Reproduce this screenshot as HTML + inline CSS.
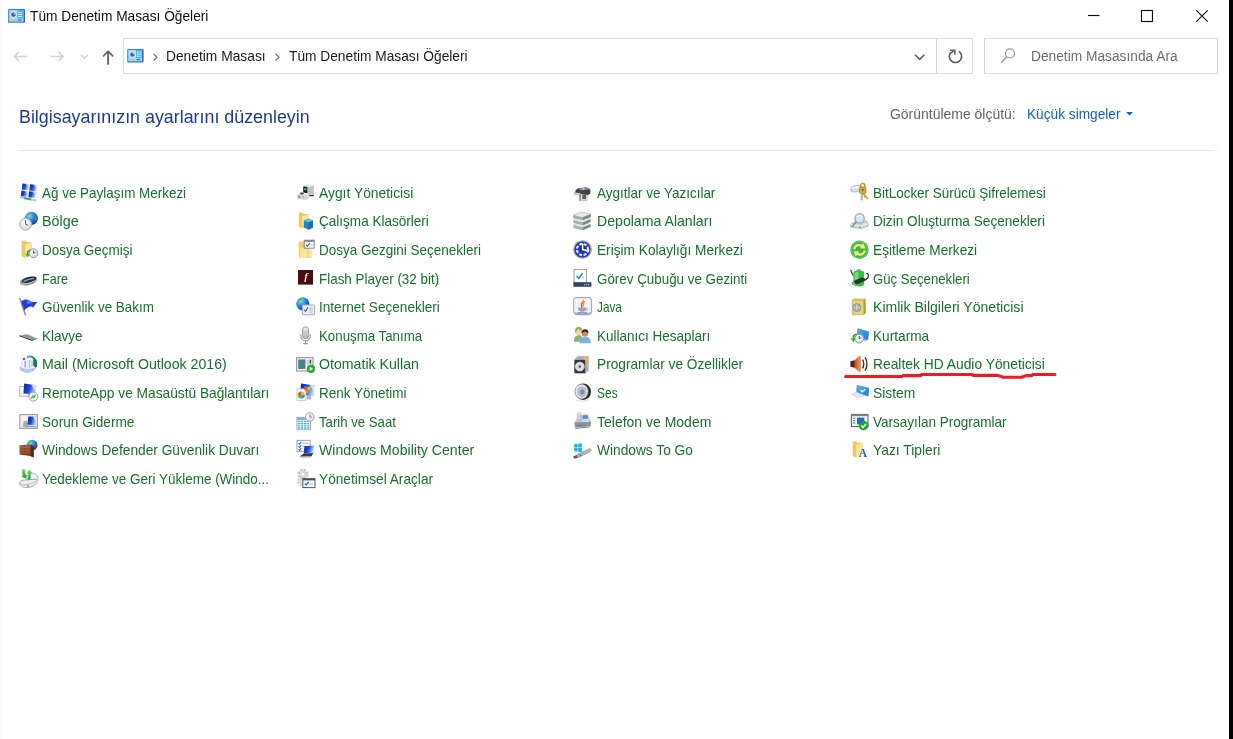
<!DOCTYPE html>
<html lang="tr"><head><meta charset="utf-8"><title>Tüm Denetim Masası Öğeleri</title>
<style>
html,body{margin:0;padding:0;background:#fff;}
body{width:1233px;height:739px;position:relative;overflow:hidden;font-family:"Liberation Sans",sans-serif;}
.t{position:absolute;white-space:nowrap;line-height:24px;height:24px;transform-origin:0 50%;}
.box{position:absolute;box-sizing:border-box;border:1px solid #d9d9d9;background:#fff;}
svg{position:absolute;overflow:visible;}
.ic{width:20px;height:20px;}
</style></head><body>

<svg width="0" height="0" style="position:absolute"><defs>
<radialGradient id="gGlobe" cx="0.35" cy="0.3" r="0.8"><stop offset="0" stop-color="#8fd4ff"/><stop offset="0.45" stop-color="#2f86e0"/><stop offset="1" stop-color="#10248c"/></radialGradient>
<linearGradient id="gMon" x1="0" y1="0" x2="1" y2="0.3"><stop offset="0" stop-color="#0a1fa8"/><stop offset="0.55" stop-color="#2148d8"/><stop offset="1" stop-color="#b8d4ff"/></linearGradient>
<linearGradient id="gFolder" x1="0" y1="0" x2="1" y2="1"><stop offset="0" stop-color="#fbe7a2"/><stop offset="1" stop-color="#f2c75c"/></linearGradient>
<linearGradient id="gGray" x1="0" y1="0" x2="0" y2="1"><stop offset="0" stop-color="#f4f5f6"/><stop offset="1" stop-color="#aeb2b8"/></linearGradient>
<linearGradient id="gGreen" x1="0" y1="0" x2="0" y2="1"><stop offset="0" stop-color="#6be070"/><stop offset="1" stop-color="#1f9a2c"/></linearGradient>
<radialGradient id="gClock" cx="0.4" cy="0.35" r="0.8"><stop offset="0" stop-color="#ffffff"/><stop offset="1" stop-color="#cfd3d8"/></radialGradient>
<linearGradient id="gBrick" x1="0" y1="0" x2="0" y2="1"><stop offset="0" stop-color="#a05a34"/><stop offset="1" stop-color="#6e3218"/></linearGradient>
<linearGradient id="gSpk" x1="0" y1="0" x2="1" y2="0"><stop offset="0" stop-color="#7a2a12"/><stop offset="0.6" stop-color="#d8683a"/><stop offset="1" stop-color="#f0a070"/></linearGradient>
<linearGradient id="gBlueMon" x1="0" y1="0" x2="1" y2="1"><stop offset="0" stop-color="#54b8f4"/><stop offset="1" stop-color="#1878d8"/></linearGradient>
<filter id="fb" x="-10%" y="-10%" width="120%" height="120%"><feGaussianBlur stdDeviation="0.35"/></filter>
</defs></svg>
<div style="position:absolute;left:1229px;top:0;width:4px;height:739px;background:#000"></div>
<div style="position:absolute;left:1px;top:0;width:1px;height:739px;background:#f8f8f8"></div>
<svg style="left:8px;top:8.9px" width="17.1" height="13.8" viewBox="0 0 17 14"><g filter="url(#fb)"><rect x="0" y="0" width="17" height="14" rx="0.9" fill="#2c78d2"/><path d="M15.8 0.6H16.6V13.4H15.8Z" fill="#0f4f9f"/>
<rect x="1" y="1" width="14.6" height="11.8" fill="#a6dbfb"/><rect x="9.2" y="1" width="5.8" height="8.6" fill="#4bb2f3"/>
<circle cx="5.4" cy="5.7" r="3.1" fill="#f4fbff"/><circle cx="5.4" cy="5.7" r="2.4" fill="#1763cf"/><path d="M5.6 5.5V2.9A2.7 2.7 0 0 1 8.2 5.5Z" fill="#f5c542"/>
<path d="M10 3.4H14.2M10 5.5H14.2M10 7.6H14.2" stroke="#f2faff" stroke-width="0.9"/><rect x="11.8" y="2.9" width="1.4" height="1" fill="#e8a020"/>
<rect x="3" y="10.4" width="5" height="1.5" fill="#f0c040"/><rect x="9.8" y="10.4" width="3.8" height="1.5" fill="#2c86e0"/></g></svg>
<span class="t " id="title" style="left:30.20px;top:4.48px;font-size:14.5px;color:#111;transform:scaleX(0.9460)">Tüm Denetim Masası Öğeleri</span>
<svg style="left:1080px;top:0" width="140" height="32" viewBox="0 0 140 32" fill="none" stroke="#111" stroke-width="1.15">
<path d="M8 15.5H19.5"/><rect x="61.5" y="10.5" width="11" height="11"/><path d="M116.3 10.3L127.7 21.7M127.7 10.3L116.3 21.7"/></svg>
<svg style="left:0;top:38px" width="124" height="36" viewBox="0 38 124 36" fill="none">
<path d="M14.4 56.5H27.4M19.1 51.9L14.4 56.5L19.1 61.1" stroke="#d4d4d4" stroke-width="1.5"/>
<path d="M50.1 56.5H63.2M58.5 51.9L63.2 56.5L58.5 61.1" stroke="#d4d4d4" stroke-width="1.5"/>
<path d="M80.9 54.5L84.5 58.3L88.1 54.5" stroke="#cdcdcd" stroke-width="1.2"/>
<path d="M108.1 64.7V51.8M103.1 56.4L108.1 51.4L113.1 56.4" stroke="#686868" stroke-width="1.9"/>
</svg>
<div class="box" style="left:123px;top:38px;width:814px;height:36px"></div>
<div class="box" style="left:936px;top:38px;width:37px;height:36px"></div>
<div class="box" style="left:984px;top:38px;width:234px;height:36px"></div>
<svg style="left:126.6px;top:49.2px" width="16.8" height="13.4" viewBox="0 0 17 14"><g filter="url(#fb)"><rect x="0" y="0" width="17" height="14" rx="0.9" fill="#2c78d2"/><path d="M15.8 0.6H16.6V13.4H15.8Z" fill="#0f4f9f"/>
<rect x="1" y="1" width="14.6" height="11.8" fill="#a6dbfb"/><rect x="9.2" y="1" width="5.8" height="8.6" fill="#4bb2f3"/>
<circle cx="5.4" cy="5.7" r="3.1" fill="#f4fbff"/><circle cx="5.4" cy="5.7" r="2.4" fill="#1763cf"/><path d="M5.6 5.5V2.9A2.7 2.7 0 0 1 8.2 5.5Z" fill="#f5c542"/>
<path d="M10 3.4H14.2M10 5.5H14.2M10 7.6H14.2" stroke="#f2faff" stroke-width="0.9"/><rect x="11.8" y="2.9" width="1.4" height="1" fill="#e8a020"/>
<rect x="3" y="10.4" width="5" height="1.5" fill="#f0c040"/><rect x="9.8" y="10.4" width="3.8" height="1.5" fill="#2c86e0"/></g></svg>
<svg style="left:150px;top:48px" width="140" height="18" viewBox="150 48 140 18" fill="none" stroke="#666" stroke-width="1.1">
<path d="M153.6 53.9L157 57.3L153.6 60.7"/><path d="M275.6 53.9L279 57.3L275.6 60.7"/></svg>
<span class="t " id="bc1" style="left:166.40px;top:44.18px;font-size:14.5px;color:#1a1a1a;transform:scaleX(0.9508)">Denetim Masası</span>
<span class="t " id="bc2" style="left:289.20px;top:44.18px;font-size:14.5px;color:#1a1a1a;transform:scaleX(0.9474)">Tüm Denetim Masası Öğeleri</span>
<svg style="left:910px;top:44px" width="110" height="26" viewBox="910 44 110 26" fill="none">
<path d="M915 54.7L919.7 59.4L924.4 54.7" stroke="#5f5f5f" stroke-width="1.6"/>
<path d="M958.9 51.3A6.15 6.15 0 1 1 950 53.6L954.5 50.3" stroke="#5f5f5f" stroke-width="1.6"/>
<path d="M950.2 50.2H954.9V54.8" stroke="#5f5f5f" stroke-width="1.5"/>
<circle cx="1010" cy="53.4" r="4.5" stroke="#8b94ac" stroke-width="1.2"/><path d="M1006.8 56.7L1001.2 62.8" stroke="#a8927e" stroke-width="1.4"/>
</svg>
<span class="t " id="search" style="left:1031.40px;top:44.15px;font-size:14.0px;color:#6d6d6d;transform:scaleX(0.9813)">Denetim Masasında Ara</span>
<span class="t " id="head" style="left:19.30px;top:104.50px;font-size:17.9px;color:#1b3a96;transform:scaleX(0.9975)">Bilgisayarınızın ayarlarını düzenleyin</span>
<span class="t " id="viewby" style="left:889.70px;top:102.48px;font-size:13.9px;color:#5f6370;transform:scaleX(1.0051)">Görüntüleme ölçütü:</span>
<span class="t " id="small" style="left:1026.90px;top:102.48px;font-size:13.9px;color:#0a64c8;transform:scaleX(0.9845)">Küçük simgeler</span>
<svg style="left:1125px;top:111px" width="9" height="6" viewBox="0 0 9 6"><path d="M1 1H8L4.5 4.6Z" fill="#0a64c8"/></svg>
<div style="position:absolute;left:14px;top:150px;width:1208px;height:1px;background:linear-gradient(90deg,rgba(220,230,244,0) 0,#dbe6f4 8px,#dbe6f4 1194px,rgba(220,230,244,0) 100%)"></div>
<svg class="ic" style="left:19px;top:182.0px" viewBox="0 0 20 20"><g filter="url(#fb)">
<path d="M0.8 15.2L17.5 18.6" stroke="#b9bec6" stroke-width="1.6"/>
<path d="M5 16L12 17.5" stroke="#2fb54a" stroke-width="2.2"/>
<path d="M3.4 1.4L9.8 2.2L9.3 8.3L2.8 7.6Z" fill="url(#gMon)"/>
<path d="M11 2.2L18 3L17.3 9.2L10.4 8.4Z" fill="url(#gMon)"/>
<path d="M2.4 8.6L8.9 9.3L8.4 15L1.8 14.3Z" fill="url(#gMon)"/>
<path d="M10 9.3L16.9 10L16.2 15.9L9.4 15.2Z" fill="url(#gMon)"/>
<path d="M6.5 2L9.6 2.4L9.4 4.5Z M14.5 2.8L17.8 3.2L17.6 5.5Z M5.5 9.2L8.7 9.5L8.5 11.5Z M13.5 9.9L16.7 10.2L16.5 12.3Z" fill="#dfeaff" opacity="0.9"/>
</g></svg>
<span class="t " id="i0_0" style="left:41.60px;top:180.88px;font-size:13.9px;color:#17702a;transform:scaleX(0.9672)">Ağ ve Paylaşım Merkezi</span>
<svg class="ic" style="left:19px;top:210.6px" viewBox="0 0 20 20"><g filter="url(#fb)">
<circle cx="12.3" cy="7.4" r="6.6" fill="url(#gGlobe)"/>
<path d="M8 3.2C9.5 1.8 11 1.6 12 2.3C11 3.5 9.5 4.4 8 5Z M16.5 5C17.6 6 17.9 8.5 17 10.5C16 9.2 15.8 6.5 16.5 5Z" fill="#3fc13c"/>
<circle cx="6.6" cy="13.2" r="5.9" fill="url(#gClock)" stroke="#a4a9b0" stroke-width="1"/>
<path d="M6.6 9V13.4L9 14.2" stroke="#555b63" stroke-width="1" fill="none"/>
</g></svg>
<span class="t " id="i0_1" style="left:41.60px;top:209.46px;font-size:13.9px;color:#17702a;transform:scaleX(1.0308)">Bölge</span>
<svg class="ic" style="left:19px;top:239.2px" viewBox="0 0 20 20"><g filter="url(#fb)">
<path d="M2.6 1.8L6.6 1.8L7.6 3L12.6 3L12.6 15.6L6.4 19.2L2.6 17.2Z" fill="#f0c860"/>
<path d="M6.2 5.6L12.6 3L12.6 15.6L6.2 19.2Z" fill="#fbe5a0"/>
<circle cx="14.5" cy="14.2" r="4.4" fill="url(#gClock)" stroke="#8e949b" stroke-width="1"/>
<path d="M14.5 11.6V14.3L16.5 13.2" stroke="#444" stroke-width="0.9" fill="none"/>
<path d="M11.2 10.6C8.6 11 7.2 13 7.8 15.4L5.8 14.8L8.8 18.2L10.6 14.2L9.3 15C9.2 13.4 10 12.4 11.4 12.2Z" fill="#2ea83a"/>
</g></svg>
<span class="t " id="i0_2" style="left:41.60px;top:238.04px;font-size:13.9px;color:#17702a;transform:scaleX(0.9679)">Dosya Geçmişi</span>
<svg class="ic" style="left:19px;top:267.7px" viewBox="0 0 20 20"><g filter="url(#fb)">
<ellipse cx="9.4" cy="13" rx="8.7" ry="4.2" transform="rotate(-14 9.4 13)" fill="#8f939a"/>
<ellipse cx="10.2" cy="11.7" rx="7.6" ry="2.7" transform="rotate(-14 10.2 11.7)" fill="#2b2e35"/>
<path d="M4.6 13.4C8 11.6 11.5 10.6 15 10.4" stroke="#8fa6c8" stroke-width="1.3" fill="none"/>
<path d="M2.2 15.6C6 16.8 12 15.4 16.6 12.4" stroke="#c3c6cb" stroke-width="1" fill="none"/>
</g></svg>
<span class="t " id="i0_3" style="left:41.60px;top:266.62px;font-size:13.9px;color:#17702a;transform:scaleX(0.9100)">Fare</span>
<svg class="ic" style="left:19px;top:296.3px" viewBox="0 0 20 20"><g filter="url(#fb)" transform="translate(0 1.2)">
<path d="M0.9 1.4L6.3 17.4" stroke="#8c919a" stroke-width="1.6" stroke-linecap="round"/>
<path d="M2.2 4.2C5 2 8 1.6 10.5 3.4C13 5.2 15.8 5.2 18.8 4.4C16.6 6.6 15.6 9 14.2 10.2C12 8.6 9.4 9.4 5.4 13.2Z" fill="#2b41cc"/>
<path d="M8 3C10 3 11.5 4.6 13.5 5.2C12 6.2 10 6 8.4 7Z" fill="#6f86ea" opacity="0.8"/>
</g></svg>
<span class="t " id="i0_4" style="left:41.60px;top:295.20px;font-size:13.9px;color:#17702a;transform:scaleX(0.9660)">Güvenlik ve Bakım</span>
<svg class="ic" style="left:19px;top:324.9px" viewBox="0 0 20 20"><g filter="url(#fb)">
<path d="M0.4 10.2L8.5 9.2L19 13.6L12.6 15.8Z" fill="#c3c7ce"/>
<path d="M0.4 10.2L12.6 14.8L19 13.6L12.6 15.8L0.4 11.2Z" fill="#2a2c31"/>
<path d="M2.4 10.2L8.3 9.6L16.6 13.3L12.7 14.3Z" fill="#8d929b"/>
</g></svg>
<span class="t " id="i0_5" style="left:41.60px;top:323.78px;font-size:13.9px;color:#17702a;transform:scaleX(0.9752)">Klavye</span>
<svg class="ic" style="left:19px;top:353.5px" viewBox="0 0 20 20"><g filter="url(#fb)">
<circle cx="10.4" cy="9.4" r="7.8" fill="url(#gGlobe)"/>
<path d="M12.6 2.2C16.6 3.6 19 8.6 17.6 13.6C15.4 11.4 13.8 6.4 12.6 2.2Z" fill="#0f8a2a"/>
<path d="M0.5 12.8L2.6 11.6L2.6 6L4.2 5L4.2 3.2L8 1.8L8 4.2L11.6 3.2L14.2 4.8L14.2 11.6L16.6 13.2L15.4 16.6L8.4 19.2L1 16.6Z" fill="#ecf3fc"/>
<path d="M0.5 12.8L8.4 15.6L16.6 13.2L15.4 16.6L8.4 19.2L1 16.6Z" fill="#b2c8ec"/>
<path d="M5.6 7H6.8V13.6H5.6Z" fill="#7f9ad0"/><path d="M9.8 6H10.8V14H9.8Z" fill="#9db4e0"/><path d="M12.6 6.4H13.4V13H12.6Z" fill="#8e9fd6"/>
<circle cx="5" cy="4.9" r="1.25" fill="#e23a22"/>
</g></svg>
<span class="t " id="i0_6" style="left:41.60px;top:352.36px;font-size:13.9px;color:#17702a;transform:scaleX(1.0187)">Mail (Microsoft Outlook 2016)</span>
<svg class="ic" style="left:19px;top:382.1px" viewBox="0 0 20 20"><g filter="url(#fb)">
<rect x="0.7" y="4.6" width="8.6" height="9.6" fill="#f7f8fa" stroke="#a7abb2" stroke-width="0.9"/>
<path d="M5.2 1.6L17.4 3.2L16.4 12.2L4.4 11.4Z" fill="url(#gMon)"/>
<path d="M12 2.6L17.2 3.3L16.6 9Z" fill="#dfeaff" opacity="0.85"/>
<circle cx="14.4" cy="14.6" r="4.5" fill="#f4f5f6" stroke="#9aa0a8" stroke-width="1"/>
<path d="M12 16.6L14 13.4L14.6 15L16.8 12.6L15 16.2L14.4 14.8Z" fill="#2ea83a" stroke="#2ea83a" stroke-width="0.6"/>
</g></svg>
<span class="t " id="i0_7" style="left:41.60px;top:380.94px;font-size:13.9px;color:#17702a;transform:scaleX(0.9879)">RemoteApp ve Masaüstü Bağlantıları</span>
<svg class="ic" style="left:19px;top:410.6px" viewBox="0 0 20 20"><g filter="url(#fb)">
<rect x="0.8" y="3.6" width="17.6" height="13.8" fill="#f3f4f5" stroke="#9b9fa5" stroke-width="1.1"/>
<path d="M3.6 16.6L4.6 10.2L7.6 9.4L9.6 16.6Z" fill="#a9adb3"/>
<path d="M9.4 5.6L17.4 5.6L17.4 14.8L8.4 13.6Z" fill="url(#gMon)"/>
<path d="M13.6 5.6H17.4V11.5Z" fill="#dfeaff" opacity="0.85"/>
<path d="M8 15.2L17.6 16" stroke="#8d9198" stroke-width="1.2"/>
</g></svg>
<span class="t " id="i0_8" style="left:41.60px;top:409.52px;font-size:13.9px;color:#17702a;transform:scaleX(0.9810)">Sorun Giderme</span>
<svg class="ic" style="left:19px;top:439.2px" viewBox="0 0 20 20"><g filter="url(#fb)">
<circle cx="13.1" cy="6.2" r="5.4" fill="url(#gGlobe)"/>
<path d="M9 3.2C10.4 1.4 12.4 0.8 14 1.2C12.6 2.8 10.8 3.8 9 4.6Z" fill="#3fc13c"/>
<path d="M0.5 6.2L11.6 5.6L14.8 7.2L14.6 18.4L11.4 17L0.7 15.6Z" fill="url(#gBrick)"/>
<path d="M11.6 5.6L14.8 7.2L14.6 18.4L11.4 17Z" fill="#5a2712"/>
<path d="M0.6 8.6L11.5 8.4M0.6 11L11.5 11.2M0.6 13.4L11.5 14" stroke="#c08a62" stroke-width="0.5" opacity="0.8"/>
</g></svg>
<span class="t " id="i0_9" style="left:41.60px;top:438.10px;font-size:13.9px;color:#17702a;transform:scaleX(0.9872)">Windows Defender Güvenlik Duvarı</span>
<svg class="ic" style="left:19px;top:467.8px" viewBox="0 0 20 20"><g filter="url(#fb)">
<ellipse cx="13.4" cy="10" rx="5.6" ry="4.8" fill="url(#gClock)" stroke="#a9adb3" stroke-width="0.9"/>
<path d="M0.4 14.6C1 13 3 12 6 12L15 11.4C17.4 11.2 19 12 18.6 13.4C18 16 13 19.4 8.4 19.6C4 19.8 0 17.6 0.4 14.6Z" fill="#eceef0" stroke="#9ea2a8" stroke-width="0.9"/>
<path d="M1 15.4C4 17.6 10 17.4 17.6 13" stroke="#b5b9bf" stroke-width="0.9" fill="none"/>
<rect x="8" y="17.2" width="1.6" height="1.6" fill="#3cc13c"/>
<path d="M3.6 0.8L6.2 1.4C6 4 6.4 5.6 7 7L8.4 6.4L6.4 10.4L2.2 8.4L3.8 8C3 5.6 3 3 3.6 0.8Z" fill="url(#gGreen)"/>
<path d="M10.4 1.4L13 5L11.6 5.2C12 7.6 11.8 9.8 11 12L8.6 11.2C9.4 9 9.6 7.4 9.2 5.6L7.8 5.8Z" fill="url(#gGreen)"/>
</g></svg>
<span class="t " id="i0_10" style="left:41.60px;top:466.68px;font-size:13.9px;color:#17702a;transform:scaleX(0.9707)">Yedekleme ve Geri Yükleme (Windo...</span>
<svg class="ic" style="left:296px;top:182.0px" viewBox="0 0 20 20"><g filter="url(#fb)">
<path d="M7.3 4.2L10.8 2.7L17.8 3.4L17.8 13.2L11 13.6L7.3 12.6Z" fill="#c2c3c5"/>
<path d="M7.3 4.2L10.8 2.7L17.8 3.4L13.6 4.9Z" fill="#e6e7e8"/>
<path d="M7.3 4.6L11.3 5L11.3 11.4L7.3 10.8Z" fill="#17191c"/>
<circle cx="9.3" cy="7.2" r="1.2" fill="#35c83a"/>
<path d="M1 12.4L5 10.4L13 11.2L13 16.6L9.6 18L1 16.6Z" fill="#d6d7d9"/>
<path d="M1 12.4L5 10.4L13 11.2L9.4 13.4Z" fill="#ececed"/>
<ellipse cx="5.9" cy="11.5" rx="1.9" ry="0.9" fill="#3a3c40"/>
<rect x="2.2" y="13.8" width="2" height="2.2" fill="#8f9296"/><rect x="6.4" y="14.2" width="1.4" height="2" fill="#a9abae"/>
<path d="M13.3 13.1H17.9V14.2H13.3Z" fill="#1c1d20"/>
</g></svg>
<span class="t " id="i1_0" style="left:319.30px;top:180.88px;font-size:13.9px;color:#17702a;transform:scaleX(0.9973)">Aygıt Yöneticisi</span>
<svg class="ic" style="left:296px;top:210.6px" viewBox="0 0 20 20"><g filter="url(#fb)">
<path d="M2.8 1.8L6.6 1.8L7.6 3L12.8 3L12.8 14.6L6.4 17.6L2.8 15.8Z" fill="#f0c860"/>
<path d="M6.2 5.4L12.8 3L12.8 14.6L6.2 17.6Z" fill="#fbe5a0"/>
<path d="M7.8 9.6L12.4 7.6L17 9.6L17 16.6L12.4 18.8L7.8 16.6Z" fill="#1f8ad0"/>
<path d="M7.8 9.6L12.4 7.6L17 9.6L12.4 11.6Z" fill="#5cc0f0"/>
<path d="M12.4 11.6L17 9.6V16.6L12.4 18.8Z" fill="#1670b8"/>
</g></svg>
<span class="t " id="i1_1" style="left:319.30px;top:209.46px;font-size:13.9px;color:#17702a;transform:scaleX(0.9749)">Çalışma Klasörleri</span>
<svg class="ic" style="left:296px;top:239.2px" viewBox="0 0 20 20"><g filter="url(#fb)">
<path d="M2.8 2.4L7.4 2.4L8.2 3.6L13 3.6L13 19L2.8 19Z" fill="#f3cd66"/>
<path d="M4.2 8.4L12 8.4L16 11.6L16 19L4.2 19Z" fill="#fbe5a0"/>
<path d="M12 8.4L12 19" stroke="#e6b94e" stroke-width="0.7"/>
<rect x="8.2" y="1.2" width="10" height="8" fill="#fbfcfd" stroke="#7f848b" stroke-width="1"/>
<rect x="8.2" y="1.2" width="10" height="1.6" fill="#7f848b"/>
<path d="M10 5.8L11.4 7.2L13.8 4.4" stroke="#1e74d8" stroke-width="1.2" fill="none"/>
<path d="M14.6 6H16.6" stroke="#9aa0a8" stroke-width="0.8"/>
</g></svg>
<span class="t " id="i1_2" style="left:319.30px;top:238.04px;font-size:13.9px;color:#17702a;transform:scaleX(0.9713)">Dosya Gezgini Seçenekleri</span>
<svg class="ic" style="left:296px;top:267.7px" viewBox="0 0 20 20"><g filter="url(#fb)">
<rect x="2" y="2" width="15" height="14.6" fill="#4a0b0d"/>
<text x="9.9" y="12.4" font-family="Liberation Serif,serif" font-style="italic" font-weight="bold" font-size="10.5" fill="#f4ecec" text-anchor="middle">f</text>
</g></svg>
<span class="t " id="i1_3" style="left:319.30px;top:266.62px;font-size:13.9px;color:#17702a;transform:scaleX(0.9669)">Flash Player (32 bit)</span>
<svg class="ic" style="left:296px;top:296.3px" viewBox="0 0 20 20"><g filter="url(#fb)">
<circle cx="6.8" cy="7.8" r="6.6" fill="url(#gGlobe)"/>
<path d="M2.4 4C3.6 2.4 5.6 1.6 7.4 1.6C6.6 3.4 4.6 4.8 2.6 5.8Z M1 9.4C2 10.6 3.4 12.6 3.2 13.6C1.8 12.6 1 11 1 9.4Z" fill="#3fc13c"/>
<rect x="6.4" y="9" width="12.2" height="9.8" rx="0.8" fill="#eceef1" stroke="#a3a8af" stroke-width="1"/>
<path d="M8 13.6L9.6 15.4L12 11.2" stroke="#1e74d8" stroke-width="1.3" fill="none"/>
<path d="M13.2 12H16.8M13.2 14H16.8M13.2 16H16.8" stroke="#a9aeb5" stroke-width="0.8"/>
</g></svg>
<span class="t " id="i1_4" style="left:319.30px;top:295.20px;font-size:13.9px;color:#17702a;transform:scaleX(0.9784)">Internet Seçenekleri</span>
<svg class="ic" style="left:296px;top:324.9px" viewBox="0 0 20 20"><g filter="url(#fb)">
<rect x="6.6" y="1.8" width="6" height="12" rx="3" fill="url(#gGray)" stroke="#8e9298" stroke-width="0.9"/>
<path d="M4.8 9.4C4.8 14 7.4 15.8 9.6 15.8C11.8 15.8 14.4 14 14.4 9.4" stroke="#8e9298" stroke-width="1.1" fill="none"/>
<path d="M9.6 15.8V18.4M7.4 18.6H11.8" stroke="#8e9298" stroke-width="1.1"/>
<path d="M7.4 6H11.8M7.4 8H11.8" stroke="#a9adb3" stroke-width="0.6"/>
</g></svg>
<span class="t " id="i1_5" style="left:319.30px;top:323.78px;font-size:13.9px;color:#17702a;transform:scaleX(0.9560)">Konuşma Tanıma</span>
<svg class="ic" style="left:296px;top:353.5px" viewBox="0 0 20 20"><g filter="url(#fb)">
<rect x="0.6" y="3.6" width="16.4" height="13.4" fill="#f4f5f6" stroke="#94989e" stroke-width="1.1"/>
<rect x="2.2" y="5.4" width="7.2" height="9.6" fill="#4e7f86"/>
<path d="M3 7H8.6M3 9.4H8.6M3 11.8H8.6" stroke="#3aa060" stroke-width="0.9" opacity="0.7"/>
<rect x="10.6" y="5.6" width="2" height="5" fill="#c8ccd2"/><rect x="13.6" y="5.6" width="1.6" height="4" fill="#30507a"/>
<circle cx="15" cy="14.8" r="3.9" fill="#2fae36" stroke="#1c8a26" stroke-width="0.6"/>
<path d="M13.8 12.8L17 14.8L13.8 16.8Z" fill="#fff"/>
</g></svg>
<span class="t " id="i1_6" style="left:319.30px;top:352.36px;font-size:13.9px;color:#17702a;transform:scaleX(1.0187)">Otomatik Kullan</span>
<svg class="ic" style="left:296px;top:382.1px" viewBox="0 0 20 20"><g filter="url(#fb)">
<path d="M11.2 13L15 13.6L15.4 17.6L10.6 17.4Z" fill="#b4b8be"/>
<path d="M5 1.6L18.6 3.6L17.6 14.2L4.2 12.4Z" fill="url(#gMon)"/>
<path d="M13.6 3L18.4 3.7L17.9 9.4Z" fill="#dfeaff" opacity="0.8"/>
<path d="M8.6 4.4C10.6 5 12.6 5 14.6 4.6C14.8 8 13.6 10.4 11.4 11.6C9.4 10.2 8.4 7.6 8.6 4.4Z" fill="#f2c23a"/>
<path d="M8.6 4.4C9.6 4.8 10.6 4.9 11.6 4.9L11.4 11.6C9.4 10.2 8.4 7.6 8.6 4.4Z" fill="#e8542e"/>
<path d="M12 8L14.4 7.6C14 9.4 13 10.8 11.4 11.6Z" fill="#54b848"/>
<path d="M0.9 7L7.6 6.8L10 9.2L10 18.4L0.9 18.4Z" fill="#fafbfc" stroke="#b0b4ba" stroke-width="0.7"/>
<circle cx="5.4" cy="13" r="3.5" fill="#f2c23a"/>
<path d="M5.4 13V9.5A3.5 3.5 0 0 0 1.9 13Z" fill="#e8542e"/>
<path d="M5.4 13H1.9A3.5 3.5 0 0 0 5.4 16.5Z" fill="#54b848"/>
<path d="M5.4 13V16.5A3.5 3.5 0 0 0 8.9 13Z" fill="#3c8ee0"/>
</g></svg>
<span class="t " id="i1_7" style="left:319.30px;top:380.94px;font-size:13.9px;color:#17702a;transform:scaleX(0.9719)">Renk Yönetimi</span>
<svg class="ic" style="left:296px;top:410.6px" viewBox="0 0 20 20"><g filter="url(#fb)">
<rect x="0.9" y="6.4" width="13.4" height="12.4" fill="#f2f8fa" stroke="#9aa3aa" stroke-width="0.9"/>
<rect x="0.9" y="6.4" width="13.4" height="2.6" fill="#8fb4c4"/>
<path d="M2 10.4H13.2M2 12.6H13.2M2 14.8H13.2M2 17H13.2" stroke="#39b4c8" stroke-width="1.3"/>
<path d="M4.4 9.2V18.4M7.6 9.2V18.4M10.8 9.2V18.4" stroke="#f2f8fa" stroke-width="0.9"/>
<circle cx="13.8" cy="6" r="4.4" fill="url(#gClock)" stroke="#9ea3aa" stroke-width="0.9"/>
<path d="M13.8 3.2V6.2H16" stroke="#666b72" stroke-width="0.8" fill="none"/>
</g></svg>
<span class="t " id="i1_8" style="left:319.30px;top:409.52px;font-size:13.9px;color:#17702a;transform:scaleX(0.9489)">Tarih ve Saat</span>
<svg class="ic" style="left:296px;top:439.2px" viewBox="0 0 20 20"><g filter="url(#fb)">
<rect x="1" y="1.4" width="13.2" height="11.2" fill="#fafbfc" stroke="#a0a4aa" stroke-width="1"/>
<path d="M2.6 4.2L3.6 5.2L5.2 3M2.6 7.4L3.6 8.4L5.2 6.2M2.6 10.4L3.6 11.4L5.2 9.2" stroke="#1e66d8" stroke-width="1.1" fill="none"/>
<path d="M6.6 4.2H12.6M6.6 7.4H12.6" stroke="#a7abb2" stroke-width="0.9"/>
<path d="M8.4 7.2L18 6.6L17.4 14L7.8 14.4Z" fill="url(#gMon)"/>
<path d="M7.8 14.4L17.4 14L15.4 17.4L3.4 17.6Z" fill="#3a3d44"/>
<path d="M5 17.8L15.2 17.6L14.8 18.6L5.6 18.8Z" fill="#aeb2b9"/>
</g></svg>
<span class="t " id="i1_9" style="left:319.30px;top:438.10px;font-size:13.9px;color:#17702a;transform:scaleX(1.0152)">Windows Mobility Center</span>
<svg class="ic" style="left:296px;top:467.8px" viewBox="0 0 20 20"><g filter="url(#fb)">
<circle cx="7" cy="6.4" r="4.2" fill="none" stroke="#c3c8cf" stroke-width="3" stroke-dasharray="2.2 1.1"/>
<circle cx="7" cy="6.4" r="3.4" fill="#d4d8de"/><circle cx="7" cy="6.4" r="1.4" fill="#fff"/>
<circle cx="5.6" cy="13.4" r="3.4" fill="none" stroke="#c9cdd4" stroke-width="2.4" stroke-dasharray="1.8 1"/>
<circle cx="5.6" cy="13.4" r="2.6" fill="#dadde2"/>
<rect x="6.8" y="10.6" width="12.2" height="9" fill="#fbfcfd" stroke="#4f545b" stroke-width="1"/>
<rect x="6.8" y="10.6" width="12.2" height="1.8" fill="#4f545b"/>
<path d="M8.8 15.6L10.2 17L12.6 14" stroke="#1e74d8" stroke-width="1.3" fill="none"/>
<path d="M13.6 16H17" stroke="#a9aeb5" stroke-width="0.8"/>
</g></svg>
<span class="t " id="i1_10" style="left:319.30px;top:466.68px;font-size:13.9px;color:#17702a;transform:scaleX(0.9849)">Yönetimsel Araçlar</span>
<svg class="ic" style="left:573px;top:182.0px" viewBox="0 0 20 20"><g filter="url(#fb)">
<path d="M6.4 10.6L14.2 10.6L14.2 18.6L6.4 18.6Z" fill="#d9dbde" stroke="#9da1a7" stroke-width="0.6"/>
<path d="M6.4 10.6H8V18.6H6.4Z" fill="#8d9197"/>
<path d="M9.4 12.6H13V17H9.4Z" fill="#55595f"/>
<path d="M4.4 6.4L13.4 5.2L17.4 7.2L17.4 11.6L15 13L2.4 11.6L2.4 8.6Z" fill="#3f4248"/>
<path d="M4.4 6.4L13.4 5.2L17.4 7.2L8.4 8.6Z" fill="#83878e"/>
<circle cx="10.6" cy="6.8" r="1.1" fill="#a9d6ff"/>
<path d="M1.4 10.6L7.4 11.2L7.4 13L1.4 12.2Z" fill="#f2f3f4" stroke="#6d7177" stroke-width="0.5"/>
</g></svg>
<span class="t " id="i2_0" style="left:596.80px;top:180.88px;font-size:13.9px;color:#17702a;transform:scaleX(0.9703)">Aygıtlar ve Yazıcılar</span>
<svg class="ic" style="left:573px;top:210.6px" viewBox="0 0 20 20"><g filter="url(#fb)">
<g id="drv"><path d="M0.4 4.2L8.4 1.2L17.6 3.2L9.6 6.4Z" fill="#e9ebee" stroke="#a4a8ae" stroke-width="0.4"/><path d="M0.4 4.2L9.6 6.4L9.6 9.2L0.4 7Z" fill="#a9adb3"/><path d="M9.6 6.4L17.6 3.2V6L9.6 9.2Z" fill="#7f848b"/><rect x="9.9" y="6.9" width="1.6" height="1.6" fill="#38c23c"/></g>
</g><g filter="url(#fb)"><use href="#drv" y="10"/><use href="#drv" y="5"/><use href="#drv" y="0"/>
</g></svg>
<span class="t " id="i2_1" style="left:596.80px;top:209.46px;font-size:13.9px;color:#17702a;transform:scaleX(1.0160)">Depolama Alanları</span>
<svg class="ic" style="left:573px;top:239.2px" viewBox="0 0 20 20"><g filter="url(#fb)">
<circle cx="9.5" cy="10.5" r="8.7" fill="#1b36b8" stroke="#a3a7b0" stroke-width="1.3"/>
<circle cx="9.5" cy="10.5" r="5.6" fill="none" stroke="#e4eaf8" stroke-width="2.2" stroke-dasharray="3 1.5"/>
<circle cx="9.5" cy="10.5" r="2.6" fill="#1a2ea0"/>
<path d="M9.6 4.6V10.6L13.6 11.4" stroke="#fff" stroke-width="1.5" fill="none"/>
<circle cx="14.8" cy="11.6" r="1.6" fill="#eef2fc"/>
</g></svg>
<span class="t " id="i2_2" style="left:596.80px;top:238.04px;font-size:13.9px;color:#17702a;transform:scaleX(0.9844)">Erişim Kolaylığı Merkezi</span>
<svg class="ic" style="left:573px;top:267.7px" viewBox="0 0 20 20"><g filter="url(#fb)">
<rect x="1" y="1.6" width="12.4" height="13.4" fill="#fcfcfd" stroke="#8f949b" stroke-width="0.9"/>
<path d="M3.6 8L5.8 10.4L9.6 5.2" stroke="#1a86d4" stroke-width="1.5" fill="none"/>
<path d="M9.8 9.6H11.2" stroke="#8a8a8a" stroke-width="0.7"/>
<rect x="0.4" y="14.2" width="18" height="4.6" fill="#36426a"/>
<path d="M11 16.6H17" stroke="#aab4d0" stroke-width="1.2" stroke-dasharray="1.2 0.8"/>
</g></svg>
<span class="t " id="i2_3" style="left:596.80px;top:266.62px;font-size:13.9px;color:#17702a;transform:scaleX(0.9632)">Görev Çubuğu ve Gezinti</span>
<svg class="ic" style="left:573px;top:296.3px" viewBox="0 0 20 20"><g filter="url(#fb)">
<rect x="0.7" y="1.6" width="17.8" height="17" rx="3" fill="#f3f4f7" stroke="#a3abbd" stroke-width="1.1"/>
<path d="M1.6 16.6C4 18.4 15 18.4 17.6 16.6" stroke="#7f8aa6" stroke-width="0.8" fill="none"/>
<path d="M10.6 3.4C6.6 6.6 12 8 8.4 12C13.4 9.6 9.6 7 13 5C11 5.4 10.4 4.6 10.6 3.4Z" fill="#f08a2c"/>
<path d="M8.8 6.6C7.4 8.4 9.6 10 8.4 12" stroke="#e84e2a" stroke-width="1.1" fill="none"/>
<path d="M5 11.6H13.4C13.4 14.6 11.8 15.8 9.2 15.8C6.6 15.8 5 14.6 5 11.6Z" fill="#90a4cc"/>
<path d="M13.4 12.2C15.6 12 15.4 14.6 12.8 14.6" stroke="#90a4cc" stroke-width="0.9" fill="none"/>
<path d="M4.4 16.8H14.2" stroke="#6f86b8" stroke-width="1.1"/>
</g></svg>
<span class="t " id="i2_4" style="left:596.80px;top:295.20px;font-size:13.9px;color:#17702a;transform:scaleX(0.8491)">Java</span>
<svg class="ic" style="left:573px;top:324.9px" viewBox="0 0 20 20"><g filter="url(#fb)">
<path d="M0.8 16.8C0.8 12.4 2.6 10.2 5.6 10.2C8.6 10.2 10.4 12.4 10.4 16.8Z" fill="#86b86a"/>
<circle cx="5.6" cy="6.6" r="3.3" fill="#ecd2b4"/>
<path d="M2 7.6C1.6 3.8 3.6 1.8 5.8 1.8C8.2 1.8 9.6 3.6 9.2 6C7.6 5.6 6 4.8 5 3.8C4.4 5.2 3.4 6.8 2 7.6Z" fill="#a8a85a"/>
<path d="M6.6 18.2C6.6 13.8 8.8 11.8 12 11.8C15.4 11.8 17.8 13.8 17.8 18.2Z" fill="#7eaee6"/>
<circle cx="12" cy="8.4" r="3.2" fill="#c98e66"/>
<path d="M8.6 8.2C8.4 5.4 10 4.2 12.2 4.2C14.4 4.2 15.8 5.8 15.4 8.4C14.4 7.4 13.2 6.6 11.6 6.4C10.6 6.8 9.6 7.4 8.6 8.2Z" fill="#2b2622"/>
</g></svg>
<span class="t " id="i2_5" style="left:596.80px;top:323.78px;font-size:13.9px;color:#17702a;transform:scaleX(0.9723)">Kullanıcı Hesapları</span>
<svg class="ic" style="left:573px;top:353.5px" viewBox="0 0 20 20"><g filter="url(#fb)">
<path d="M1.4 5.4L4.6 2.2L15.6 2.2L15.6 16.6L12.4 19.4L1.4 19.4Z" fill="#c9ccd0"/>
<path d="M4.6 2.2L15.6 2.2L15.6 16.6L12.4 19.4L12.4 5.4L1.4 5.4Z" fill="#aeb2b7"/>
<rect x="10.6" y="3.4" width="3.6" height="6" fill="#f0b030"/><rect x="11.4" y="4.4" width="2" height="2" fill="#e8e04a"/>
<rect x="1.4" y="5.8" width="10.8" height="13.4" fill="#34373c"/>
<circle cx="6.8" cy="12.6" r="4.4" fill="#d9dce0" stroke="#f4f5f6" stroke-width="0.7"/>
<circle cx="6.8" cy="12.6" r="1.3" fill="#5a5d63"/>
</g></svg>
<span class="t " id="i2_6" style="left:596.80px;top:352.36px;font-size:13.9px;color:#17702a;transform:scaleX(0.9861)">Programlar ve Özellikler</span>
<svg class="ic" style="left:573px;top:382.1px" viewBox="0 0 20 20"><g filter="url(#fb)">
<ellipse cx="10.2" cy="9.8" rx="7.8" ry="8.2" fill="#26282c"/>
<ellipse cx="8.6" cy="9.6" rx="6.6" ry="7.4" fill="#e9ebee" stroke="#7d8187" stroke-width="0.7"/>
<ellipse cx="8.8" cy="9.8" rx="4.8" ry="5.6" fill="#b9bec6"/>
<ellipse cx="9.2" cy="10" rx="2.2" ry="2.6" fill="#7f8a9c"/>
<path d="M3 18.4C6 19.6 12 19.4 15 18" stroke="#d9dbde" stroke-width="1" fill="none"/>
</g></svg>
<span class="t " id="i2_7" style="left:596.80px;top:380.94px;font-size:13.9px;color:#17702a;transform:scaleX(0.8608)">Ses</span>
<svg class="ic" style="left:573px;top:410.6px" viewBox="0 0 20 20"><g filter="url(#fb)">
<path d="M1.4 11.4L5.4 4.2L14.6 3.2L18 10.6L17.6 15L2 16.6Z" fill="#c3c7cd"/>
<path d="M1.4 11.4L17.8 10.4L17.6 15L2 16.6Z" fill="#8e939b"/>
<path d="M4.6 5.4C3.4 3.4 5 1.2 7 1.6C8 2 8 3 7.2 3.6C6.6 4.2 6.8 5.6 7.6 7.4C8 8.4 7 9.4 6 9C5 8.4 4.8 6.6 4.6 5.4Z" fill="#e3e5e9" stroke="#8e939b" stroke-width="0.5"/>
<path d="M9.4 4.6L14.4 4L15.4 7.4L10 8Z" fill="#4d8fe0"/>
<path d="M9.6 9.2L15.6 8.6M9.8 10.6L16 10" stroke="#f1f2f4" stroke-width="0.8"/>
<path d="M4.4 14.6H11.6" stroke="#3a78c8" stroke-width="1.1" stroke-dasharray="1.4 0.8"/>
<path d="M2.4 17.4L17.2 15.8" stroke="#6d7178" stroke-width="0.9"/>
</g></svg>
<span class="t " id="i2_8" style="left:596.80px;top:409.52px;font-size:13.9px;color:#17702a;transform:scaleX(1.0075)">Telefon ve Modem</span>
<svg class="ic" style="left:573px;top:439.2px" viewBox="0 0 20 20"><g filter="url(#fb)">
<path d="M1.2 5.2L4.6 4.8V8.4H1.2Z M5.2 4.7L8.8 4.2V8.4H5.2Z M1.2 9H4.6V12.6L1.2 12.2Z M5.2 9H8.8V13.2L5.2 12.7Z" fill="#12b0ee"/>
<path d="M3.4 16L16 9.8C17.6 9.2 18.8 11.6 17.4 12.6L5.4 18.6Z" fill="#b4b8be" stroke="#7f848b" stroke-width="0.6"/>
<path d="M0 17.6L3.4 16L5.4 18.6L1.6 19.8Z" fill="#5b5f66"/>
<path d="M7 15.4L8 17.2" stroke="#3c62d0" stroke-width="1.3"/>
</g></svg>
<span class="t " id="i2_9" style="left:596.80px;top:438.10px;font-size:13.9px;color:#17702a;transform:scaleX(0.9887)">Windows To Go</span>
<svg class="ic" style="left:850px;top:182.0px" viewBox="0 0 20 20"><g filter="url(#fb)">
<path d="M0.4 6.8C0.6 5 4 3.6 9 3.2L12.6 4.4L12.6 7.8C10 9.6 5 10.4 1.6 9.6Z" fill="#eef0f2" stroke="#a1a5ab" stroke-width="0.8"/>
<path d="M0.8 7.4C4 8.6 9 8 12.4 5.8" stroke="#b4b8be" stroke-width="0.8" fill="none"/>
<path d="M11.4 10.6L12.6 10.6L12.8 17.6L11.6 18.4L10.8 17.4Z" fill="#b9bcc2" stroke="#8d9197" stroke-width="0.4"/>
<path d="M13.6 10.6L18.6 16.8L17.2 17.6L15.6 15.4L14.6 16L12.8 11.4Z" fill="#c6a02c"/>
<rect x="9.4" y="5" width="6.6" height="6.4" rx="1" fill="#d4aa38" stroke="#9c7a1e" stroke-width="0.6"/>
<path d="M10.6 5.2V3.6C10.6 0.8 14.8 0.8 14.8 3.6V5.2" stroke="#b8962e" stroke-width="1.3" fill="none"/>
<circle cx="12.7" cy="8" r="1" fill="#7a5e14"/>
</g></svg>
<span class="t " id="i3_0" style="left:873.10px;top:180.88px;font-size:13.9px;color:#17702a;transform:scaleX(0.9686)">BitLocker Sürücü Şifrelemesi</span>
<svg class="ic" style="left:850px;top:210.6px" viewBox="0 0 20 20"><g filter="url(#fb)">
<path d="M0.4 13.4L6.4 10.4L16.6 10L18.4 12.6L18.2 15L11 17.6L0.6 16Z" fill="#d5d8dc" stroke="#9ca0a6" stroke-width="0.7"/>
<path d="M0.4 13.4L10.8 15L18.4 12.6" stroke="#f4f5f6" stroke-width="0.8" fill="none"/>
<rect x="9" y="15.4" width="1.5" height="1.5" fill="#38c23c"/>
<path d="M6.4 11L2.2 15.4" stroke="#8d9299" stroke-width="1.8" stroke-linecap="round"/>
<circle cx="9.6" cy="7.4" r="4.7" fill="#d4e6f8" stroke="#98a3b2" stroke-width="1.2"/>
<path d="M6.8 6.6C7.6 4.8 10 4 12 5.2" stroke="#fff" stroke-width="1" fill="none"/>
</g></svg>
<span class="t " id="i3_1" style="left:873.10px;top:209.46px;font-size:13.9px;color:#17702a;transform:scaleX(0.9811)">Dizin Oluşturma Seçenekleri</span>
<svg class="ic" style="left:850px;top:239.2px" viewBox="0 0 20 20"><g filter="url(#fb)">
<circle cx="9.5" cy="10.8" r="9.2" fill="#3cb244"/>
<circle cx="9.5" cy="10.8" r="8.2" fill="none" stroke="#5fd060" stroke-width="1.2"/>
<path d="M3.2 10.2C3.4 5.8 8.4 3.6 12 5.8L13.2 4L15.6 9.4L9.8 9.4L10.8 7.8C8.6 6.6 5.8 7.6 5.6 10.2Z" fill="#f7e98a"/>
<path d="M15.8 11.4C15.6 15.8 10.6 18 7 15.8L5.8 17.6L3.4 12.2L9.2 12.2L8.2 13.8C10.4 15 13.2 14 13.4 11.4Z" fill="#f7e98a"/>
</g></svg>
<span class="t " id="i3_2" style="left:873.10px;top:238.04px;font-size:13.9px;color:#17702a;transform:scaleX(0.9849)">Eşitleme Merkezi</span>
<svg class="ic" style="left:850px;top:267.7px" viewBox="0 0 20 20"><g filter="url(#fb)">
<path d="M0.6 1.8C1.4 4 2 6 3.6 8" stroke="#30333a" stroke-width="1.1" fill="none"/>
<rect x="6.6" y="1.2" width="4.2" height="2" fill="#9aa0a8"/>
<path d="M3.4 4.6C3.4 3.4 5.4 2.6 8.8 2.6C12.2 2.6 14.2 3.4 14.2 4.6V16C14.2 17.4 12.2 18.4 8.8 18.4C5.4 18.4 3.4 17.4 3.4 16Z" fill="#33c046"/>
<path d="M4.6 5C5.6 4.2 7 4 8.4 4V17.4C6.8 17.4 5.4 17 4.6 16.4Z" fill="#7be688" opacity="0.8"/>
<path d="M14 12.4C17 11.4 18.6 9 18.2 6.6C18 5.4 17 5.2 16.6 6" stroke="#30333a" stroke-width="1.3" fill="none"/>
<path d="M3.6 13L11.6 9.6L15 10.6L15.2 12.8L7 16.4L3.2 15.2Z" fill="#2e3036"/>
<path d="M1.4 14.6L4.4 13.4L5.4 15.8L2.4 17Z" fill="#8d9299"/>
</g></svg>
<span class="t " id="i3_3" style="left:873.10px;top:266.62px;font-size:13.9px;color:#17702a;transform:scaleX(0.9491)">Güç Seçenekleri</span>
<svg class="ic" style="left:850px;top:296.3px" viewBox="0 0 20 20"><g filter="url(#fb)">
<path d="M2.2 4.2L4.2 2.6L15.4 2.6L15.8 16.8L13.8 18.8L2.4 18.8Z" fill="#dcc662"/>
<path d="M13.4 4.4L15.4 2.6L15.8 16.8L13.8 18.8Z" fill="#b89c3a"/>
<path d="M2.2 4.2L13.4 4.4L13.8 18.8L2.4 18.8Z" fill="#e4d47e" stroke="#bfa646" stroke-width="0.5"/>
<circle cx="6.8" cy="11.6" r="3.9" fill="#bfc3c8" stroke="#83878d" stroke-width="0.9"/>
<path d="M4.8 13.6L8.8 9.6M4.8 9.6L8.8 13.6" stroke="#6d7177" stroke-width="0.8"/>
<circle cx="6.8" cy="11.6" r="1.1" fill="#e9ebed"/>
</g></svg>
<span class="t " id="i3_4" style="left:873.10px;top:295.20px;font-size:13.9px;color:#17702a;transform:scaleX(1.0120)">Kimlik Bilgileri Yöneticisi</span>
<svg class="ic" style="left:850px;top:324.9px" viewBox="0 0 20 20"><g filter="url(#fb)">
<path d="M13.2 13.4L16.6 14.6L16.4 16.2L12.6 15.2Z" fill="#aeb2b8"/>
<path d="M7.8 3.6L18.8 6.8L17.8 14.8L7 11.4Z" fill="url(#gBlueMon)" stroke="#2a6cb8" stroke-width="0.5"/>
<circle cx="9.2" cy="13.6" r="4.4" fill="url(#gClock)" stroke="#8d9299" stroke-width="1"/>
<path d="M9.2 10.8V13.8L11.2 12.6" stroke="#444" stroke-width="0.9" fill="none"/>
<path d="M6.6 8.4C3.6 8.6 2 11 2.8 13.6L0.4 13L3.6 17.2L5.8 12.6L4.4 13.4C4.2 11.4 5.2 10.2 6.8 10Z" fill="#2ea83a"/>
</g></svg>
<span class="t " id="i3_5" style="left:873.10px;top:323.78px;font-size:13.9px;color:#17702a;transform:scaleX(0.9842)">Kurtarma</span>
<svg class="ic" style="left:850px;top:353.5px" viewBox="0 0 20 20"><g filter="url(#fb)">
<path d="M0.6 7.2L4.4 6.4L10.2 1.2C11.4 4 11.6 15.6 10.2 18.8L4.4 13.6L0.6 12.8Z" fill="url(#gSpk)"/>
<path d="M0.6 7.2L4.4 6.4V13.6L0.6 12.8Z" fill="#5e2010"/>
<path d="M12.6 5.6C14.2 8 14.2 12 12.6 14.4" stroke="#3a2a28" stroke-width="1.3" fill="none"/>
<path d="M15 3.4C17.6 7 17.6 13 15 16.6" stroke="#3a2a28" stroke-width="1.3" fill="none"/>
</g></svg>
<span class="t " id="i3_6" style="left:873.10px;top:352.36px;font-size:13.9px;color:#17702a;transform:scaleX(0.9949)">Realtek HD Audio Yöneticisi</span>
<svg class="ic" style="left:850px;top:382.1px" viewBox="0 0 20 20"><g filter="url(#fb)">
<path d="M10.6 12L14.4 13L14.2 14.6L9.6 13.6Z" fill="#c3c7cd"/>
<path d="M7 3.4L18.8 6.2L18.2 14L6.6 10.6Z" fill="url(#gBlueMon)" stroke="#2a6cb8" stroke-width="0.5"/>
<path d="M10.6 8L12.2 9.8L15.4 7.2" stroke="#fff" stroke-width="1.3" fill="none"/>
<path d="M1.2 12.4L6.4 10L14.4 13.4L8.6 15.8Z" fill="#e6e8ec" stroke="#c3c7cd" stroke-width="0.6"/>
</g></svg>
<span class="t " id="i3_7" style="left:873.10px;top:380.94px;font-size:13.9px;color:#17702a;transform:scaleX(0.9929)">Sistem</span>
<svg class="ic" style="left:850px;top:410.6px" viewBox="0 0 20 20"><g filter="url(#fb)">
<rect x="1.4" y="3.4" width="16.6" height="12.2" fill="#fbfcfd" stroke="#555a61" stroke-width="1"/>
<rect x="1.4" y="3.4" width="16.6" height="1.8" fill="#7d828a"/>
<path d="M3 7.2H5.4M3 9.6H5.4M3 12H5.4" stroke="#3c62d0" stroke-width="1"/>
<rect x="7" y="6.6" width="7.4" height="6.8" fill="#2b63d4"/>
<circle cx="13.6" cy="14.6" r="4.5" fill="#27a838" stroke="#187a26" stroke-width="0.5"/>
<path d="M11.4 14.6L13 16.4L16 13" stroke="#fff" stroke-width="1.4" fill="none"/>
</g></svg>
<span class="t " id="i3_8" style="left:873.10px;top:409.52px;font-size:13.9px;color:#17702a;transform:scaleX(0.9743)">Varsayılan Programlar</span>
<svg class="ic" style="left:850px;top:439.2px" viewBox="0 0 20 20"><g filter="url(#fb)">
<path d="M2.8 2.6L6.4 2.6L7.4 3.8L12.6 3.8L12.6 15.4L6.4 18.8L2.8 17Z" fill="#f0c860"/>
<path d="M6.2 6.2L12.6 3.8L12.6 15.4L6.2 18.8Z" fill="#fbe5a0"/>
<text x="12.8" y="18" font-family="Liberation Serif,serif" font-weight="bold" font-size="11.5" fill="#1a66d0" text-anchor="middle">A</text>
</g></svg>
<span class="t " id="i3_9" style="left:873.10px;top:438.10px;font-size:13.9px;color:#17702a;transform:scaleX(0.9958)">Yazı Tipleri</span>
<svg style="left:840px;top:368px" width="222" height="16" viewBox="840 368 222 16" fill="none">
<path d="M845.6 376.5H902L903.2 375.6H920.6L921.8 374.5H972.2L973.4 375.4H997.6L1003.4 377.3H1021.6L1026 375.6H1031.8L1033 374.5H1055" stroke="#ed1c24" stroke-width="3.1" stroke-linecap="round" stroke-linejoin="round"/></svg>
</body></html>
